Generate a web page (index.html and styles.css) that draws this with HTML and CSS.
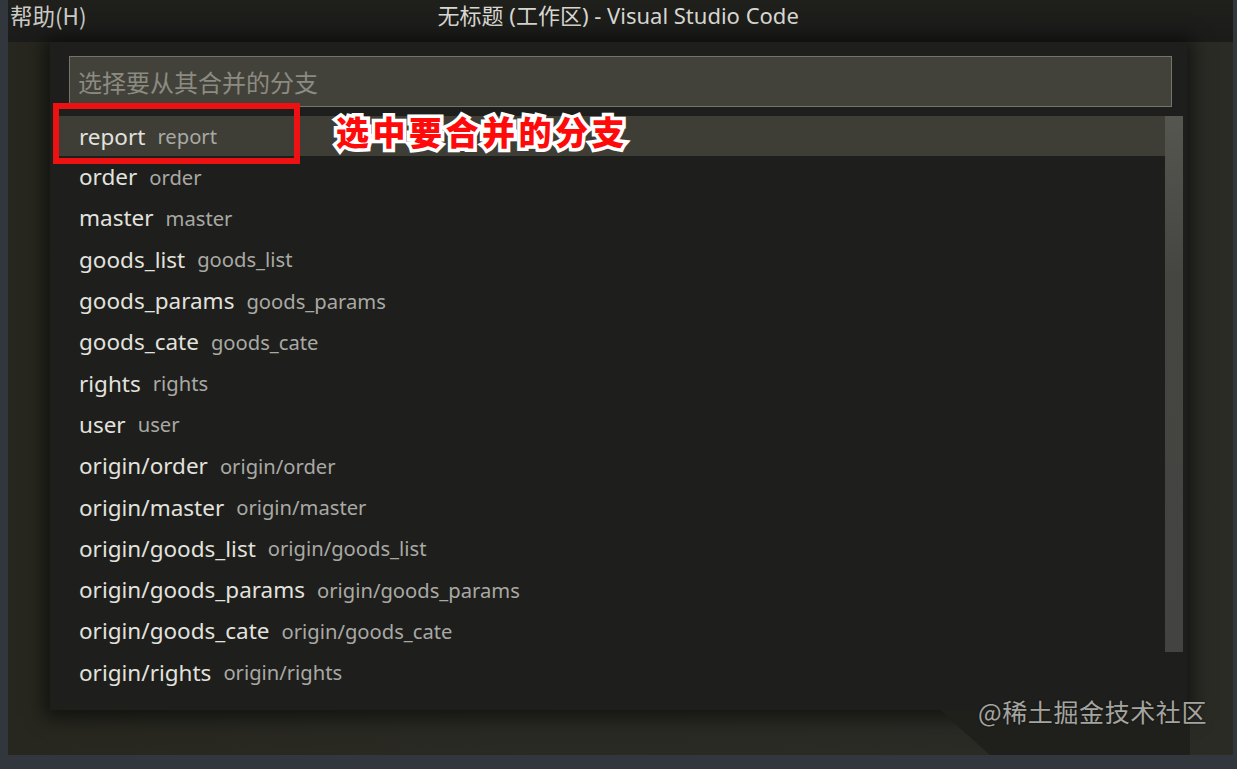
FILE: index.html
```html
<!DOCTYPE html>
<html lang="zh-CN">
<head>
<meta charset="utf-8">
<title>无标题 (工作区) - Visual Studio Code</title>
<link rel="stylesheet" href="styles.css">
</head>
<body>
<div class="window">
  <header class="titlebar">
    <span class="menu">帮助(H)</span>
    <span class="title">无标题 (工作区) - Visual Studio Code</span>
  </header>
  <main class="editor">
    <section class="quickpick">
      <div class="input">选择要从其合并的分支</div>
      <ul class="list">
        <li class="row selected"><span class="label">report</span><span class="desc">report</span></li>
        <li class="row"><span class="label">order</span><span class="desc">order</span></li>
        <li class="row"><span class="label">master</span><span class="desc">master</span></li>
        <li class="row"><span class="label">goods_list</span><span class="desc">goods_list</span></li>
        <li class="row"><span class="label">goods_params</span><span class="desc">goods_params</span></li>
        <li class="row"><span class="label">goods_cate</span><span class="desc">goods_cate</span></li>
        <li class="row"><span class="label">rights</span><span class="desc">rights</span></li>
        <li class="row"><span class="label">user</span><span class="desc">user</span></li>
        <li class="row"><span class="label">origin/order</span><span class="desc">origin/order</span></li>
        <li class="row"><span class="label">origin/master</span><span class="desc">origin/master</span></li>
        <li class="row"><span class="label">origin/goods_list</span><span class="desc">origin/goods_list</span></li>
        <li class="row"><span class="label">origin/goods_params</span><span class="desc">origin/goods_params</span></li>
        <li class="row"><span class="label">origin/goods_cate</span><span class="desc">origin/goods_cate</span></li>
        <li class="row"><span class="label">origin/rights</span><span class="desc">origin/rights</span></li>
      </ul>
      <div class="scrollbar"></div>
      <div class="highlight-box"></div>
      <div class="annotation">选中要合并的分支</div>
    </section>
    <div class="corner"></div>
    <div class="watermark">@稀土掘金技术社区</div>
  </main>
</div>
</body>
</html>
```

FILE: styles.css
```css
* { box-sizing: border-box; }
html, body { margin: 0; padding: 0; }
body {
  width: 1237px;
  height: 769px;
  background: #32373d;
  font-family: "Noto Sans", "Noto Sans CJK SC", sans-serif;
  overflow: hidden;
}
.window {
  margin: 0 4px 0 8px;
  width: 1225px;
  height: 755px;
  display: flex;
  flex-direction: column;
  background: #2a2a25;
}
.titlebar {
  height: 42px;
  flex: none;
  display: flex;
  align-items: flex-start;
  padding-top: 0;
  background: linear-gradient(#1f1f1c, #1b1b19);
  color: #cfcfcb;
  line-height: 30px;
}
.menu {
  padding-left: 2px;
  font-family: "Noto Sans CJK SC", sans-serif;
  font-size: 22.5px;
  line-height: 30px;
  color: #cbcbc6;
}
.title {
  margin-left: 351px;
  font-size: 22px;
  color: #d8d8d2;
  font-family: "Noto Sans", "Noto Sans CJK SC", sans-serif;
}
.editor {
  flex: 1;
  position: relative;
  display: flex;
  background: linear-gradient(90deg, #27271f 0, #2a2a24 40%, #2b2b26 100%);
}
.quickpick {
  position: relative;
  margin-left: 42px;
  width: 1137px;
  height: 668px;
  background: #1e1e1c;
  box-shadow: 0 2px 18px 6px rgba(0,0,0,0.55);
  padding: 14px 15px 0 19px;
}
.input {
  height: 51px;
  background: #43423a;
  border: 1px solid #75746a;
  color: #8c8b82;
  font-family: "Noto Sans CJK SC", sans-serif;
  font-size: 24px;
  line-height: 49px;
  padding-left: 8px;
}
.list {
  list-style: none;
  margin: 9px 4px 0 -13px;
  padding: 0;
}
.row {
  height: 41.3px;
  display: flex;
  align-items: center;
  gap: 12px;
  padding-left: 23px;
  white-space: nowrap;
}
.row.selected {
  height: 40px;
  background: #3e3e37;
  margin-right: 0;
}
.label {
  color: #e2e2de;
  font-size: 22.5px;
}
.desc {
  color: #a9a9a4;
  font-size: 20.2px;
}
.scrollbar {
  position: absolute;
  left: 1115px;
  top: 74px;
  width: 18px;
  height: 536px;
  background: linear-gradient(#565650, #454542 30%, #434341);
}
.highlight-box {
  position: absolute;
  left: 3px;
  top: 61px;
  width: 247px;
  height: 61px;
  border: 6px solid #ee1111;
}
.annotation {
  position: absolute;
  left: 286px;
  top: 66px;
  font-family: "Noto Sans CJK SC", sans-serif;
  font-weight: 900;
  font-size: 33px;
  letter-spacing: 3.5px;
  color: #ff0a0a;
  line-height: 46px;
  -webkit-text-stroke: 7px #ffffff;
  paint-order: stroke fill;
}
.corner {
  position: absolute;
  left: 932px;
  top: 668px;
  width: 250px;
  height: 45px;
  background: #1f1f1b;
  clip-path: polygon(0 0, 100% 0, 100% 100%, 50px 100%);
}
.watermark {
  position: absolute;
  left: 970px;
  top: 651px;
  font-family: "Noto Sans CJK SC", sans-serif;
  font-size: 25px;
  color: #a4a4a0;
  text-shadow: 0 0 2px #111;
  letter-spacing: 0.6px;
}
```
